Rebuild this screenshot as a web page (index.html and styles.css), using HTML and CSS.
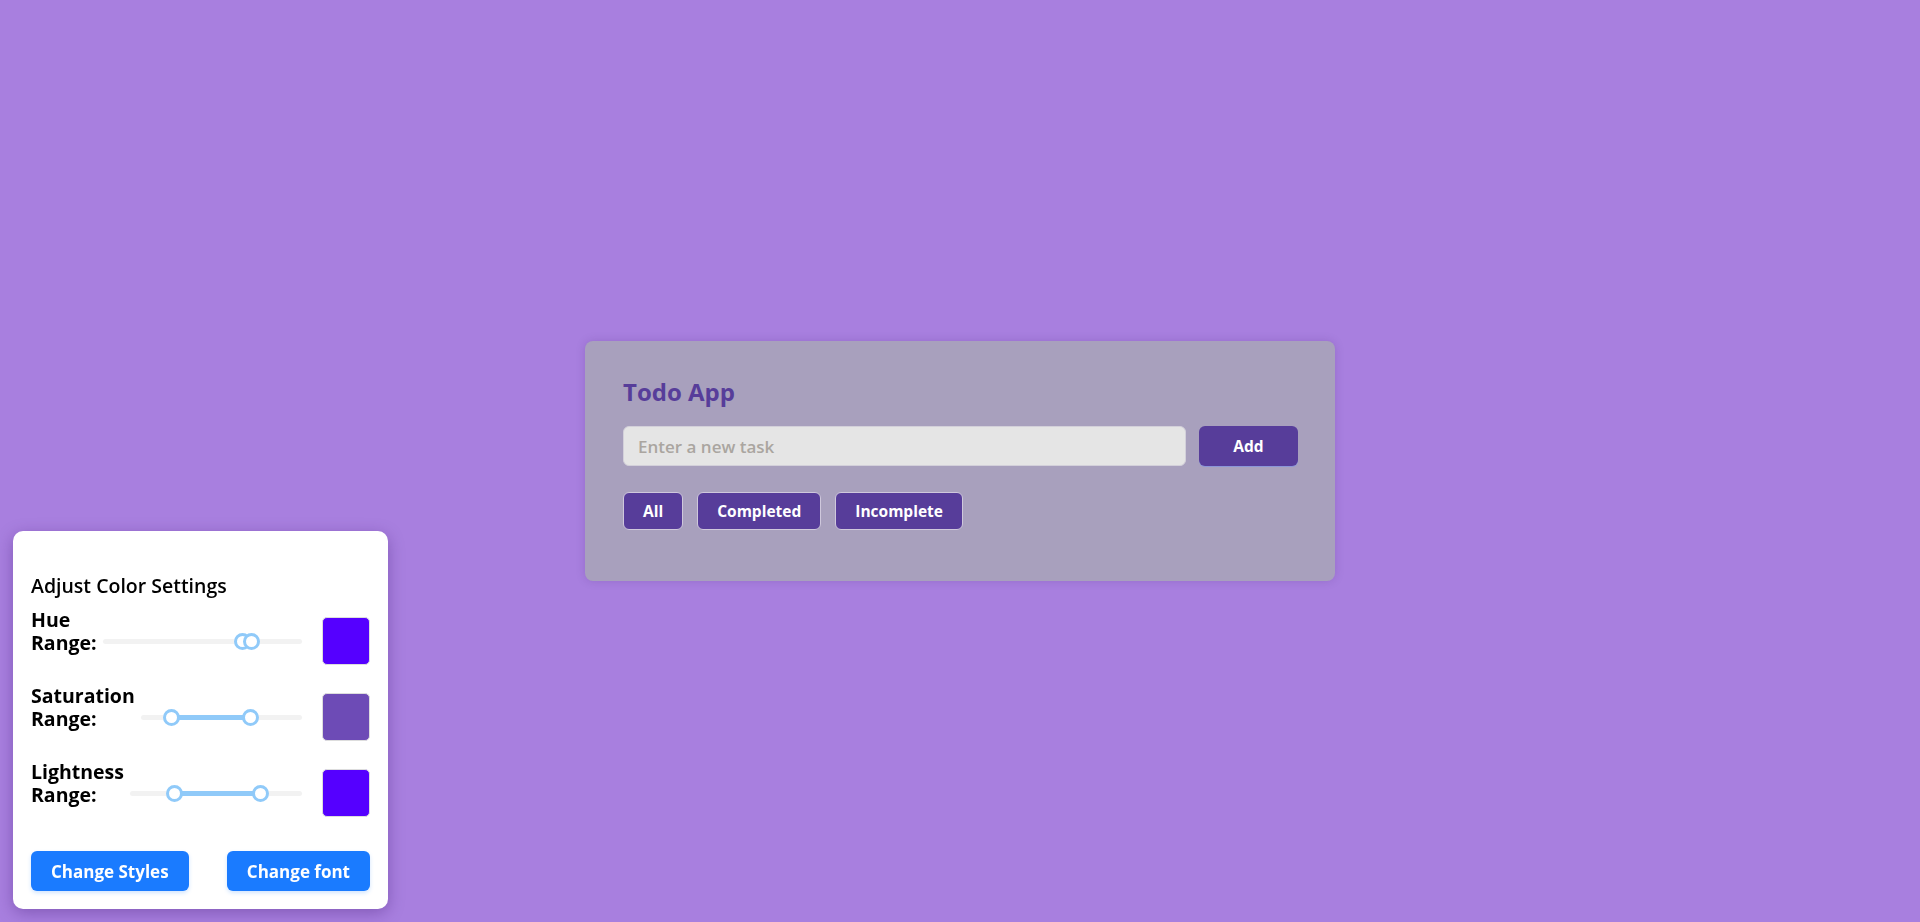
FILE: index.html
```html
<!DOCTYPE html>
<html lang="en">
<head>
<meta charset="utf-8">
<title>Todo App</title>
<link rel="stylesheet" href="styles.css">
</head>
<body>
<main class="stage">
  <section class="todo-card">
    <h1 class="todo-title">Todo App</h1>
    <div class="add-row">
      <input class="task-input" type="text" placeholder="Enter a new task">
      <button class="btn-purple add-btn">Add</button>
    </div>
    <div class="filters">
      <button class="btn-purple filter-btn">All</button>
      <button class="btn-purple filter-btn">Completed</button>
      <button class="btn-purple filter-btn">Incomplete</button>
    </div>
  </section>
</main>

<aside class="settings">
  <h3 class="settings-title">Adjust Color Settings</h3>
  <div class="rows">
    <div class="row">
      <label class="row-label">Hue Range:</label>
      <div class="slider">
        <div class="track"></div>
        <div class="fill" style="left:70%;width:4.6%"></div>
        <span class="thumb" style="left:70%"></span>
        <span class="thumb" style="left:74.6%"></span>
      </div>
      <div class="swatch swatch-a"></div>
    </div>
    <div class="row">
      <label class="row-label">Saturation Range:</label>
      <div class="slider">
        <div class="track"></div>
        <div class="fill" style="left:19%;width:49%"></div>
        <span class="thumb" style="left:19%"></span>
        <span class="thumb" style="left:68%"></span>
      </div>
      <div class="swatch swatch-b"></div>
    </div>
    <div class="row">
      <label class="row-label">Lightness Range:</label>
      <div class="slider">
        <div class="track"></div>
        <div class="fill" style="left:26%;width:49.6%"></div>
        <span class="thumb" style="left:26%"></span>
        <span class="thumb" style="left:75.6%"></span>
      </div>
      <div class="swatch swatch-a"></div>
    </div>
  </div>
  <div class="settings-actions">
    <button class="btn-blue">Change Styles</button>
    <button class="btn-blue">Change font</button>
  </div>
</aside>
</body>
</html>
```

FILE: styles.css
```css
* { box-sizing: border-box; }

html, body {
  margin: 0;
  padding: 0;
}

body {
  background: #a87fdf;
  font-family: "Open Sans", "Liberation Sans", sans-serif;
  height: 100vh;
  overflow: hidden;
}

.stage {
  height: 100vh;
  display: flex;
  align-items: center;
  justify-content: center;
}

.todo-card {
  width: 750px;
  height: 240px;
  background: #a8a0bd;
  border-radius: 8px;
  padding: 36px 37px 51px 38px;
  box-shadow: 0 0 10px rgba(60, 30, 110, 0.18);
  display: flex;
  flex-direction: column;
}

.todo-title {
  margin: 0 0 20px 0;
  font-size: 24px;
  line-height: 29px;
  font-weight: 700;
  color: #573d9a;
}

.add-row {
  display: flex;
  gap: 13px;
  height: 40px;
}

.task-input {
  flex: 1;
  height: 40px;
  border: 1px solid #d3d0da;
  border-radius: 6px;
  background: #e5e5e5;
  padding: 0 14px;
  font-family: inherit;
  font-size: 17px;
  font-weight: 600;
  color: #333;
  outline: none;
}

.task-input::placeholder {
  color: #aaa5a0;
}

.btn-purple {
  background: #573d9a;
  color: #fff;
  font-family: inherit;
  font-weight: 700;
  font-size: 15.5px;
  border-radius: 6px;
  cursor: pointer;
}

.add-btn {
  width: 99px;
  height: 40px;
  border: none;
  box-shadow: 0 1px 0 #8c96d8;
}

.filters {
  display: flex;
  gap: 14px;
  margin-top: 26px;
}

.filter-btn {
  height: 38px;
  padding: 0 19px;
  border: 1px solid #cfc8dc;
}

.settings {
  position: fixed;
  left: 13px;
  bottom: 13px;
  width: 375px;
  height: 378px;
  background: #fff;
  border-radius: 10px;
  padding: 43px 18px 18px 18px;
  box-shadow: 0 4px 16px rgba(60, 20, 110, 0.35);
  display: flex;
  flex-direction: column;
}

.settings-title {
  margin: 0;
  font-size: 19.5px;
  line-height: 23px;
  font-weight: 600;
  color: #000;
}

.rows {
  margin-top: 11px;
  display: flex;
  flex-direction: column;
  gap: 10px;
}

.row {
  display: flex;
  align-items: center;
  height: 66px;
}

.row-label {
  width: min-content;
  font-size: 19.5px;
  line-height: 23px;
  font-weight: 700;
  color: #000;
  margin-bottom: 20px;
  margin-right: 6px;
}

.slider {
  position: relative;
  flex: 1;
  height: 17px;
}

.track {
  position: absolute;
  left: 0;
  right: 0;
  top: 6px;
  height: 5px;
  border-radius: 3px;
  background: #f2f2f2;
}

.fill {
  position: absolute;
  top: 6px;
  height: 5px;
  background: #90caf9;
}

.thumb {
  position: absolute;
  top: 0;
  width: 17px;
  height: 17px;
  margin-left: -8.5px;
  border-radius: 50%;
  border: 3px solid #90caf9;
  background: #fff;
}

.swatch {
  width: 48px;
  height: 48px;
  margin-left: 20px;
  border-radius: 5px;
  border: 1px solid #ddd;
  flex: none;
}

.swatch-a { background: #5500ff; }
.swatch-b { background: #6d4bb6; }

.settings-actions {
  margin-top: 25px;
  display: flex;
  justify-content: space-between;
}

.btn-blue {
  height: 40px;
  padding: 0 20px;
  border: none;
  border-radius: 6px;
  background: #1a7bff;
  color: #fff;
  font-family: inherit;
  font-size: 17px;
  font-weight: 700;
  box-shadow: 0 2px 4px rgba(26, 123, 255, 0.2);
  cursor: pointer;
}
```
